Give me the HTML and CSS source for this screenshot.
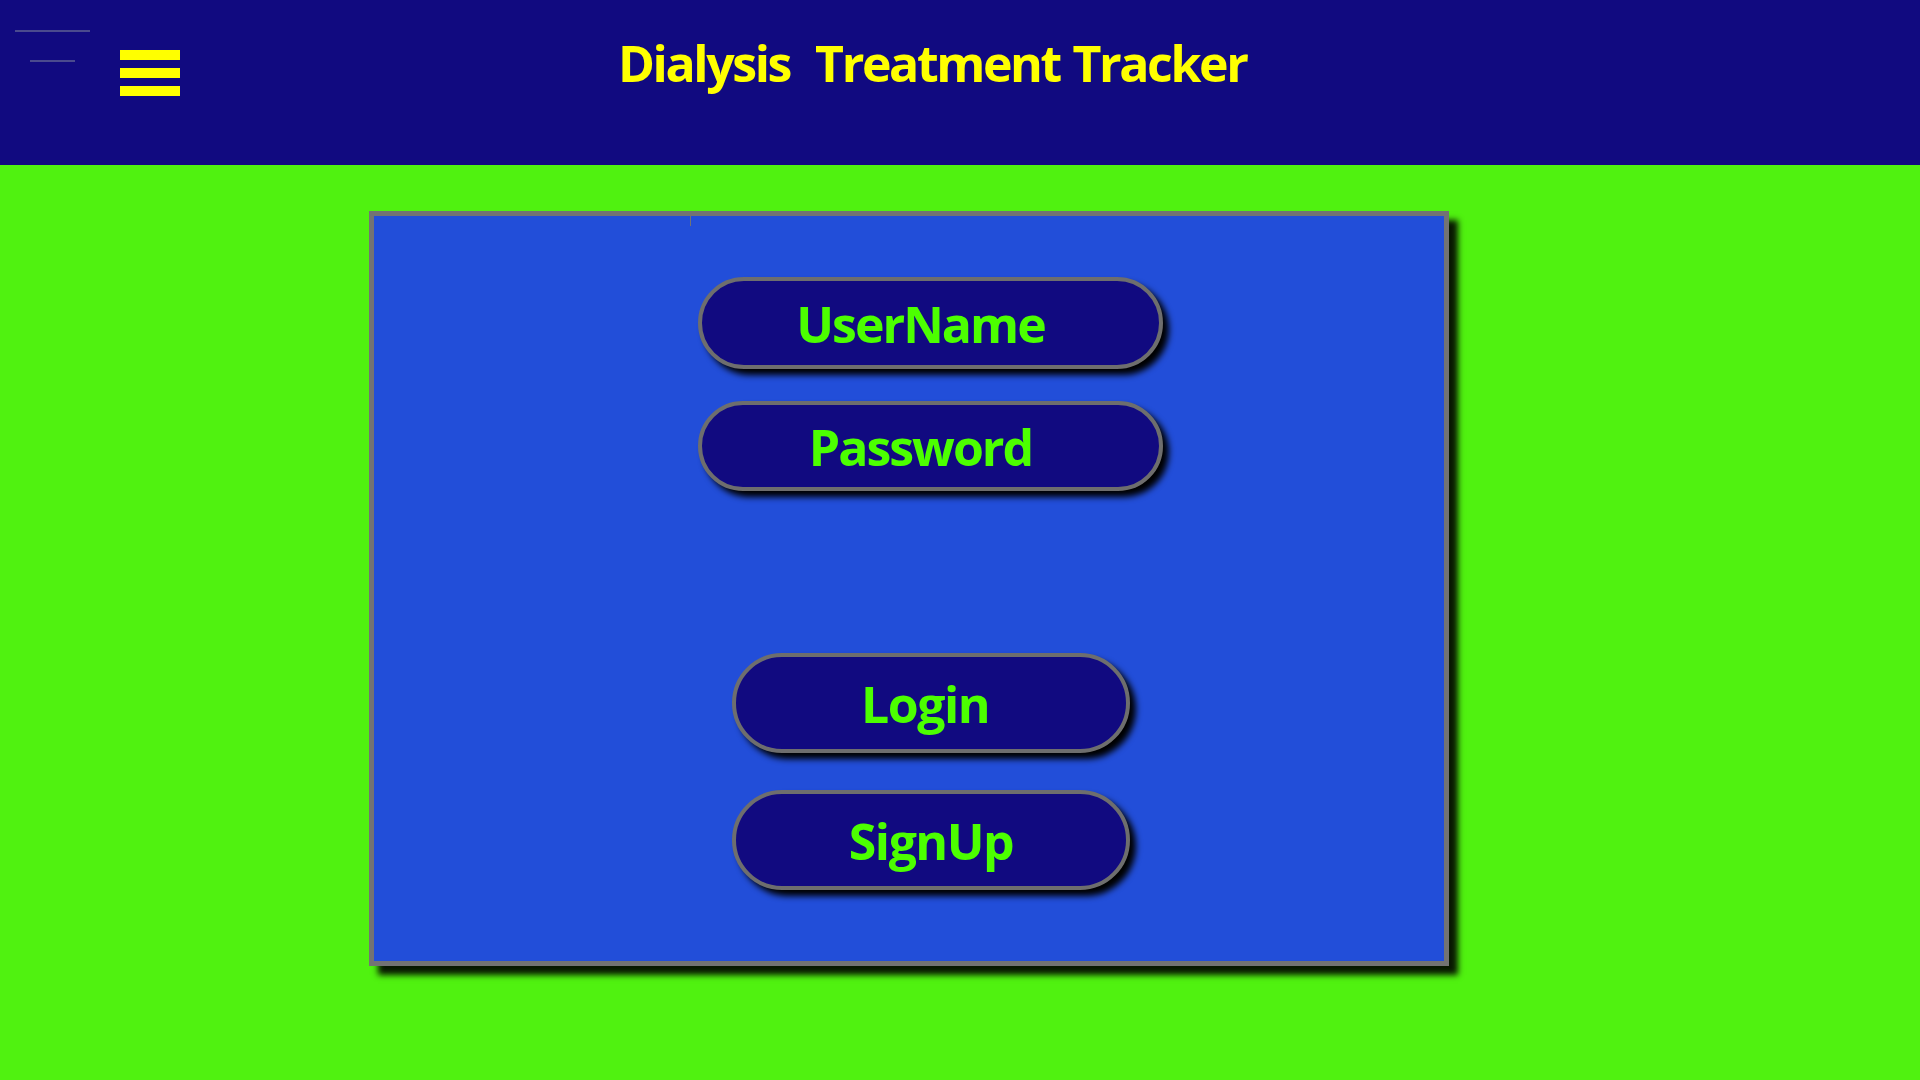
FILE: index.html
```html
<!DOCTYPE html>
<html>
<head>
<meta charset="utf-8">
<title>Dialysis Treatment Tracker</title>
<link rel="stylesheet" href="styles.css">
</head>
<body>
<header class="topbar">
  <div class="deco">
    <span class="deco-line deco-long"></span>
    <span class="deco-line deco-short"></span>
  </div>
  <div class="burger">
    <span></span><span></span><span></span>
  </div>
  <h1 class="title">Dialysis&nbsp; Treatment Tracker</h1>
</header>
<main class="stage">
  <section class="card">
    <span class="tick"></span>
    <div class="field field-user">UserName</div>
    <div class="field field-pass">Password</div>
    <button class="action action-login">Login</button>
    <button class="action action-signup">SignUp</button>
  </section>
</main>
</body>
</html>
```
FILE: styles.css
```css
html, body {
  margin: 0;
  padding: 0;
  height: 100%;
}
body {
  background: #50f210;
  font-family: "Open Sans", "Noto Sans", sans-serif;
  overflow: hidden;
}
.topbar {
  height: 165px;
  background: #110a80;
  display: flex;
  align-items: flex-start;
  box-sizing: border-box;
}
.deco {
  width: 120px;
  display: flex;
  flex-direction: column;
  padding-top: 30px;
}
.deco-line {
  display: block;
  height: 2px;
  background: #4a4a8e;
}
.deco-long {
  width: 75px;
  margin-left: 15px;
}
.deco-short {
  width: 45px;
  margin-left: 30px;
  margin-top: 28px;
}
.burger {
  width: 60px;
  margin-top: 50px;
  display: flex;
  flex-direction: column;
  gap: 8px;
}
.burger span {
  display: block;
  height: 10px;
  background: #ffff00;
}
.title {
  margin: 0 0 0 438px;
  padding-top: 28px;
  color: #ffff00;
  font-size: 50px;
  font-weight: 700;
  line-height: 70px;
  letter-spacing: -2.4px;
  word-spacing: 2px;
  white-space: nowrap;
}
.stage {
  padding-top: 46px;
  padding-left: 369px;
}
.card {
  position: relative;
  width: 1080px;
  height: 755px;
  box-sizing: border-box;
  border: 5px solid #737373;
  background: #224ed9;
  box-shadow: 9px 9px 6px rgba(0,0,0,0.9);
  display: flex;
  flex-direction: column;
  align-items: flex-start;
  padding-top: 61px;
}
.tick {
  position: absolute;
  left: 316px;
  top: 0;
  width: 1px;
  height: 10px;
  background: #737373;
}
.field, .action {
  box-sizing: border-box;
  border: 4px solid #6e6e6e;
  border-radius: 50px;
  background: #110a80;
  color: #4cff00;
  font-family: "Open Sans", "Noto Sans", sans-serif;
  font-weight: 700;
  font-size: 50px;
  letter-spacing: -2px;
  display: flex;
  align-items: center;
  justify-content: center;
  box-shadow: 6px 6px 6px #000;
  padding: 2px 20px 0 0;
}
.field {
  margin-left: 324px;
  width: 465px;
  height: 92px;
}
.field-pass {
  margin-top: 32px;
  height: 90px;
}
.action {
  margin-left: 358px;
  width: 398px;
  height: 100px;
  padding-right: 12px;
  letter-spacing: -1.5px;
  cursor: pointer;
}
.action-login {
  margin-top: 162px;
}
.action-signup {
  margin-top: 37px;
  padding-right: 0;
}
```
